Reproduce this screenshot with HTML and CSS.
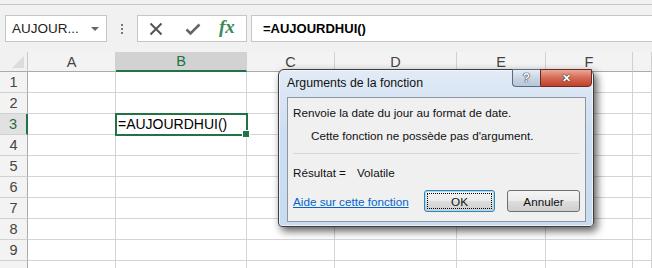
FILE: index.html
```html
<!DOCTYPE html>
<html lang="fr">
<head>
    <meta charset="UTF-8">
    <title>AUJOURDHUI</title>
    <link rel="stylesheet" href="styles.css">
</head>
<body>
    <div class="app">
        <div class="top-line"></div>

        <!-- Formula bar -->
        <div class="formula-row">
            <div class="name-box">
                <span>AUJOUR...</span>
                <span class="name-arrow"></span>
            </div>
            <div class="grip"><i></i><i></i><i></i></div>
            <div class="fx-box">
                <svg class="fx-icon" viewBox="0 0 14 14" width="14" height="14">
                    <path d="M1.5 1.5L12.5 12.5M12.5 1.5L1.5 12.5" stroke="#555" stroke-width="2" fill="none"/>
                </svg>
                <svg class="fx-icon" viewBox="0 0 16 14" width="16" height="14">
                    <path d="M1.5 7.5L5.5 11.5L14.5 2.5" stroke="#666" stroke-width="2.6" fill="none"/>
                </svg>
                <span class="fx-text">fx</span>
            </div>
            <div class="formula-input">=AUJOURDHUI()</div>
        </div>

        <!-- Sheet -->
        <div class="sheet">
            <div class="corner"></div>
            <div class="col-head">A</div>
            <div class="col-head selected">B</div>
            <div class="col-head">C</div>
            <div class="col-head">D</div>
            <div class="col-head">E</div>
            <div class="col-head">F</div>
            <div class="col-head"></div>

            <div class="row-head">1</div><div class="cell"></div><div class="cell"></div><div class="cell"></div><div class="cell"></div><div class="cell"></div><div class="cell"></div><div class="cell"></div>
            <div class="row-head">2</div><div class="cell"></div><div class="cell"></div><div class="cell"></div><div class="cell"></div><div class="cell"></div><div class="cell"></div><div class="cell"></div>
            <div class="row-head selected">3</div><div class="cell"></div><div class="cell active">=AUJOURDHUI()</div><div class="cell"></div><div class="cell"></div><div class="cell"></div><div class="cell"></div><div class="cell"></div>
            <div class="row-head">4</div><div class="cell"></div><div class="cell"></div><div class="cell"></div><div class="cell"></div><div class="cell"></div><div class="cell"></div><div class="cell"></div>
            <div class="row-head">5</div><div class="cell"></div><div class="cell"></div><div class="cell"></div><div class="cell"></div><div class="cell"></div><div class="cell"></div><div class="cell"></div>
            <div class="row-head">6</div><div class="cell"></div><div class="cell"></div><div class="cell"></div><div class="cell"></div><div class="cell"></div><div class="cell"></div><div class="cell"></div>
            <div class="row-head">7</div><div class="cell"></div><div class="cell"></div><div class="cell"></div><div class="cell"></div><div class="cell"></div><div class="cell"></div><div class="cell"></div>
            <div class="row-head">8</div><div class="cell"></div><div class="cell"></div><div class="cell"></div><div class="cell"></div><div class="cell"></div><div class="cell"></div><div class="cell"></div>
            <div class="row-head">9</div><div class="cell"></div><div class="cell"></div><div class="cell"></div><div class="cell"></div><div class="cell"></div><div class="cell"></div><div class="cell"></div>
            <div class="row-head"></div><div class="cell"></div><div class="cell"></div><div class="cell"></div><div class="cell"></div><div class="cell"></div><div class="cell"></div><div class="cell"></div>
        </div>

        <!-- Function arguments dialog -->
        <div class="dialog">
            <div class="dialog-title">Arguments de la fonction</div>
            <div class="title-buttons">
                <div class="tb-help">?</div>
                <div class="tb-close">&#x2715;</div>
            </div>
            <div class="dialog-panel">
                <p class="desc">Renvoie la date du jour au format de date.</p>
                <p class="no-args">Cette fonction ne possède pas d'argument.</p>
                <div class="separator"></div>
                <p class="result">Résultat =<span class="result-value">Volatile</span></p>
                <div class="dialog-footer">
                    <a class="help-link" href="#">Aide sur cette fonction</a>
                    <button class="btn btn-default"><span>OK</span></button>
                    <button class="btn">Annuler</button>
                </div>
            </div>
        </div>
    </div>
</body>
</html>
```

FILE: styles.css
```css
* {
    margin: 0;
    padding: 0;
    box-sizing: border-box;
}

body {
    font-family: "Liberation Sans", Arial, sans-serif;
    background: #f1f1f1;
    color: #000;
    width: 652px;
    height: 268px;
    overflow: hidden;
}

.app {
    position: relative;
    height: 268px;
    overflow: hidden;
}

.top-line {
    height: 5px;
    border-bottom: 1px solid #c6c6c6;
}

/* Formula bar */
.formula-row {
    display: flex;
    align-items: center;
    height: 27px;
    margin-top: 10px;
    padding-left: 5px;
}

.name-box {
    width: 102px;
    height: 27px;
    background: #fff;
    border: 1px solid #c6c6c6;
    display: flex;
    align-items: center;
    justify-content: space-between;
    padding: 0 7px 0 6px;
    font-size: 13.5px;
    color: #222;
}

.name-arrow {
    width: 0;
    height: 0;
    border-left: 4px solid transparent;
    border-right: 4px solid transparent;
    border-top: 4px solid #666;
}

.grip {
    width: 30px;
    display: flex;
    flex-direction: column;
    align-items: center;
    gap: 2px;
}

.grip i {
    display: block;
    width: 2px;
    height: 2px;
    background: #777;
}

.fx-box {
    width: 110px;
    height: 27px;
    background: #fff;
    border: 1px solid #c6c6c6;
    display: flex;
    align-items: center;
    padding-left: 11px;
    gap: 22px;
}

.fx-text {
    font-family: "Liberation Serif", serif;
    font-style: italic;
    font-weight: bold;
    font-size: 19px;
    color: #3a8a55;
    margin-left: -4px;
    margin-top: -3px;
}

.formula-input {
    flex: 1;
    height: 27px;
    margin-left: 4px;
    background: #fff;
    border: 1px solid #c6c6c6;
    border-right: none;
    padding-left: 11px;
    display: flex;
    align-items: center;
    font-size: 13px;
    font-weight: bold;
}

/* Sheet */
.sheet {
    margin-top: 10px;
    display: grid;
    grid-template-columns: 28px 88px 131px 88px 122px 89px 87px 1fr;
    grid-template-rows: 20px repeat(10, 21px);
    background: #fff;
}

.corner {
    background: #f1f1f1;
    border-right: 1px solid #c8c8c8;
    border-bottom: 1px solid #ababab;
    position: relative;
}

.corner::after {
    content: "";
    position: absolute;
    right: 3px;
    bottom: 3px;
    border-left: 12px solid transparent;
    border-bottom: 12px solid #dcdcdc;
}

.col-head {
    background: #f3f3f3;
    border-right: 1px solid #d0d0d0;
    border-bottom: 1px solid #ababab;
    display: flex;
    align-items: center;
    justify-content: center;
    font-size: 14.5px;
    color: #444;
}

.col-head.selected {
    background: #d2d2d2;
    border-bottom: 2px solid #217346;
    color: #217346;
}

.row-head {
    background: #f3f3f3;
    border-right: 1px solid #ababab;
    border-bottom: 1px solid #d0d0d0;
    display: flex;
    align-items: center;
    justify-content: center;
    font-size: 14.5px;
    color: #444;
}

.row-head.selected {
    background: #e1e1e1;
    border-right: 2px solid #217346;
    color: #2a6a45;
}

.cell {
    border-right: 1px solid #d4d4d4;
    border-bottom: 1px solid #d4d4d4;
    font-size: 14px;
    display: flex;
    align-items: center;
    padding-left: 2px;
}

.cell.active {
    position: relative;
}

.cell.active::before {
    content: "";
    position: absolute;
    left: -1px;
    top: -1px;
    right: -2px;
    bottom: -2px;
    border: 2px solid #217346;
}

.cell.active::after {
    content: "";
    position: absolute;
    right: -4px;
    bottom: -4px;
    width: 6px;
    height: 6px;
    background: #217346;
    border: 1px solid #fff;
}

/* Dialog */
.dialog {
    position: absolute;
    left: 278px;
    top: 69px;
    width: 316px;
    height: 158px;
    border: 1px solid #3f3f3f;
    border-radius: 6px 6px 4px 4px;
    background: linear-gradient(#e2ebf6, #cddef2 40%, #c9dbf1);
    box-shadow: 3px 4px 9px rgba(0, 0, 0, 0.65), inset 0 0 0 1px rgba(255, 255, 255, 0.6);
    padding: 0 7px 4px 8px;
    display: flex;
    flex-direction: column;
}

.dialog-title {
    height: 27px;
    padding-top: 6px;
    font-size: 12.3px;
    color: #111;
}

.title-buttons {
    position: absolute;
    top: -1px;
    right: 1px;
    display: flex;
}

.tb-help, .tb-close {
    height: 18px;
    border: 1px solid #5a6b80;
    display: flex;
    align-items: center;
    justify-content: center;
    color: #fff;
    font-weight: bold;
    font-size: 12px;
    text-shadow: 0 0 1px #333, 0 0 1px #333, 0 0 1px #333;
}

.tb-help {
    width: 28px;
    border-radius: 0 0 0 4px;
    border-right: none;
    background: linear-gradient(#e6edf5, #c8d5e4 50%, #b6c6d9);
}

.tb-close {
    width: 52px;
    border-color: #6b2a22;
    border-radius: 0 0 4px 0;
    background: linear-gradient(#eba698, #d46a55 50%, #c2402a);
    font-size: 11px;
}

.dialog-panel {
    flex: 1;
    background: #f0f0f0;
    border: 1px solid #8e96a0;
    padding: 8px 5px 0 5px;
    display: flex;
    flex-direction: column;
    font-size: 11.7px;
    color: #111;
}

.desc {
    line-height: 14px;
}

.no-args {
    line-height: 14px;
    margin-top: 9px;
    padding-left: 18px;
}

.separator {
    height: 1px;
    background: #d9d9d9;
    margin-top: 10px;
}

.result {
    line-height: 14px;
    margin-top: 12px;
}

.result-value {
    margin-left: 11px;
}

.dialog-footer {
    display: flex;
    align-items: center;
    margin-top: 10px;
}

.help-link {
    color: #0066cc;
    text-decoration: underline;
    margin-right: auto;
}

.btn {
    font-family: "Liberation Sans", Arial, sans-serif;
    font-size: 11.7px;
    color: #111;
    height: 22px;
    width: 73px;
    border: 1px solid #707070;
    border-radius: 3px;
    background: linear-gradient(#f4f4f4, #ebebeb 50%, #dddddd 51%, #cfcfcf);
    margin-left: 12px;
}

.btn-default {
    width: 71px;
    border-color: #3c7fb1;
    box-shadow: inset 0 0 0 1px #a6dcf7;
    padding: 2px;
}

.btn-default span {
    display: flex;
    align-items: center;
    justify-content: center;
    height: 100%;
    border: 1px dotted #000;
}
```
